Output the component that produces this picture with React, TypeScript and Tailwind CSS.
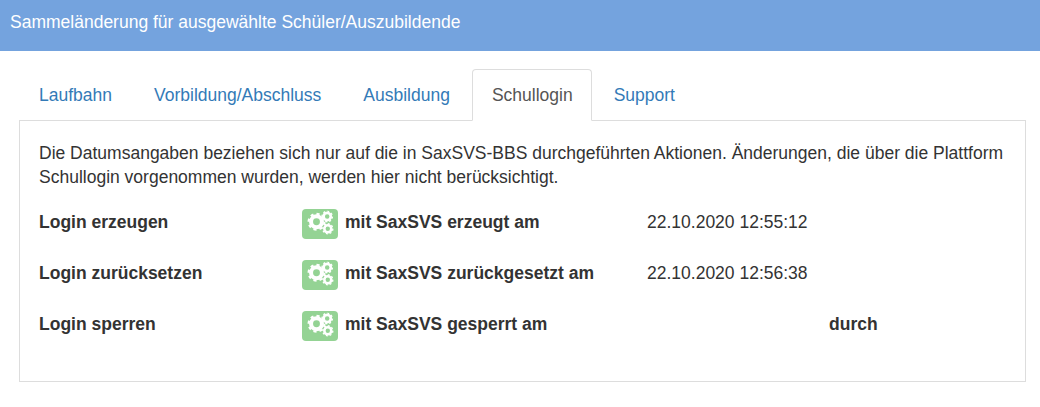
import React from "react";

const tabs = ["Laufbahn", "Vorbildung/Abschluss", "Ausbildung", "Schullogin", "Support"];

const rows = [
  { label: "Login erzeugen", action: "mit SaxSVS erzeugt am", date: "22.10.2020 12:55:12", by: "" },
  { label: "Login zurücksetzen", action: "mit SaxSVS zurückgesetzt am", date: "22.10.2020 12:56:38", by: "" },
  { label: "Login sperren", action: "mit SaxSVS gesperrt am", date: "", by: "durch" },
];

function Gear({ x, y, r, teeth }: { x: number; y: number; r: number; teeth: number }) {
  return (
    <g fill="none" stroke="white">
      <circle cx={x} cy={y} r={r * 0.62} strokeWidth={r * 0.46} />
      <circle cx={x} cy={y} r={r * 0.9} strokeWidth={r * 0.24} pathLength={teeth * 2} strokeDasharray="1 1" />
    </g>
  );
}

function CogsIcon() {
  return (
    <svg viewBox="0 0 36 30" className="h-[30px] w-[36px]">
      <Gear x={14.5} y={12.8} r={8.8} teeth={8} />
      <Gear x={25.2} y={7.6} r={5.8} teeth={8} />
      <Gear x={25.8} y={19.8} r={5.6} teeth={8} />
    </svg>
  );
}

export default function App() {
  return (
    <div className="min-h-[407px] bg-white text-[17.5px] leading-[24px] text-[#333333] font-['Liberation_Sans',Arial,sans-serif]">
      <div className="h-[51px] bg-[#74a3de] pl-[10px] pt-[10px] text-white">
        Sammeländerung für ausgewählte Schüler/Auszubildende
      </div>

      <div className="pl-[19px] pr-[14px] pt-[18px]">
        <ul className="flex h-[52px] border-b border-[#dddddd]">
          {tabs.map((tab) => {
            const active = tab === "Schullogin";
            return (
              <li key={tab} className="mr-[2px] h-[52px]">
                <a
                  className={
                    active
                      ? "block h-[52px] rounded-t border border-[#dddddd] border-b-white bg-white pl-[19px] pr-[18px] pt-[13px] text-[#555555]"
                      : "block h-[51px] rounded-t border border-transparent px-[19px] pt-[13px] text-[#337ab7]"
                  }
                >
                  {tab}
                </a>
              </li>
            );
          })}
        </ul>

        <div className="h-[261px] border border-t-0 border-[#dddddd] pl-[19px] pr-[17px] pt-[20px]">
          <p>
            Die Datumsangaben beziehen sich nur auf die in SaxSVS-BBS durchgeführten Aktionen. Änderungen, die über die
            Plattform Schullogin vorgenommen wurden, werden hier nicht berücksichtigt.
          </p>

          <div className="mt-[20px] flex flex-col gap-[21px]">
            {rows.map((row) => (
              <div key={row.label} className="flex h-[30px] items-start">
                <div className="w-[263px] pt-[1px] font-bold">{row.label}</div>
                <button className="h-[30px] w-[36px] rounded bg-[#94d394]">
                  <CogsIcon />
                </button>
                <div className="ml-[7px] w-[302px] pt-[1px] font-bold">{row.action}</div>
                <div className="w-[182px] pt-[1px]">{row.date}</div>
                <div className="pt-[1px] font-bold">{row.by}</div>
              </div>
            ))}
          </div>
        </div>
      </div>
    </div>
  );
}
